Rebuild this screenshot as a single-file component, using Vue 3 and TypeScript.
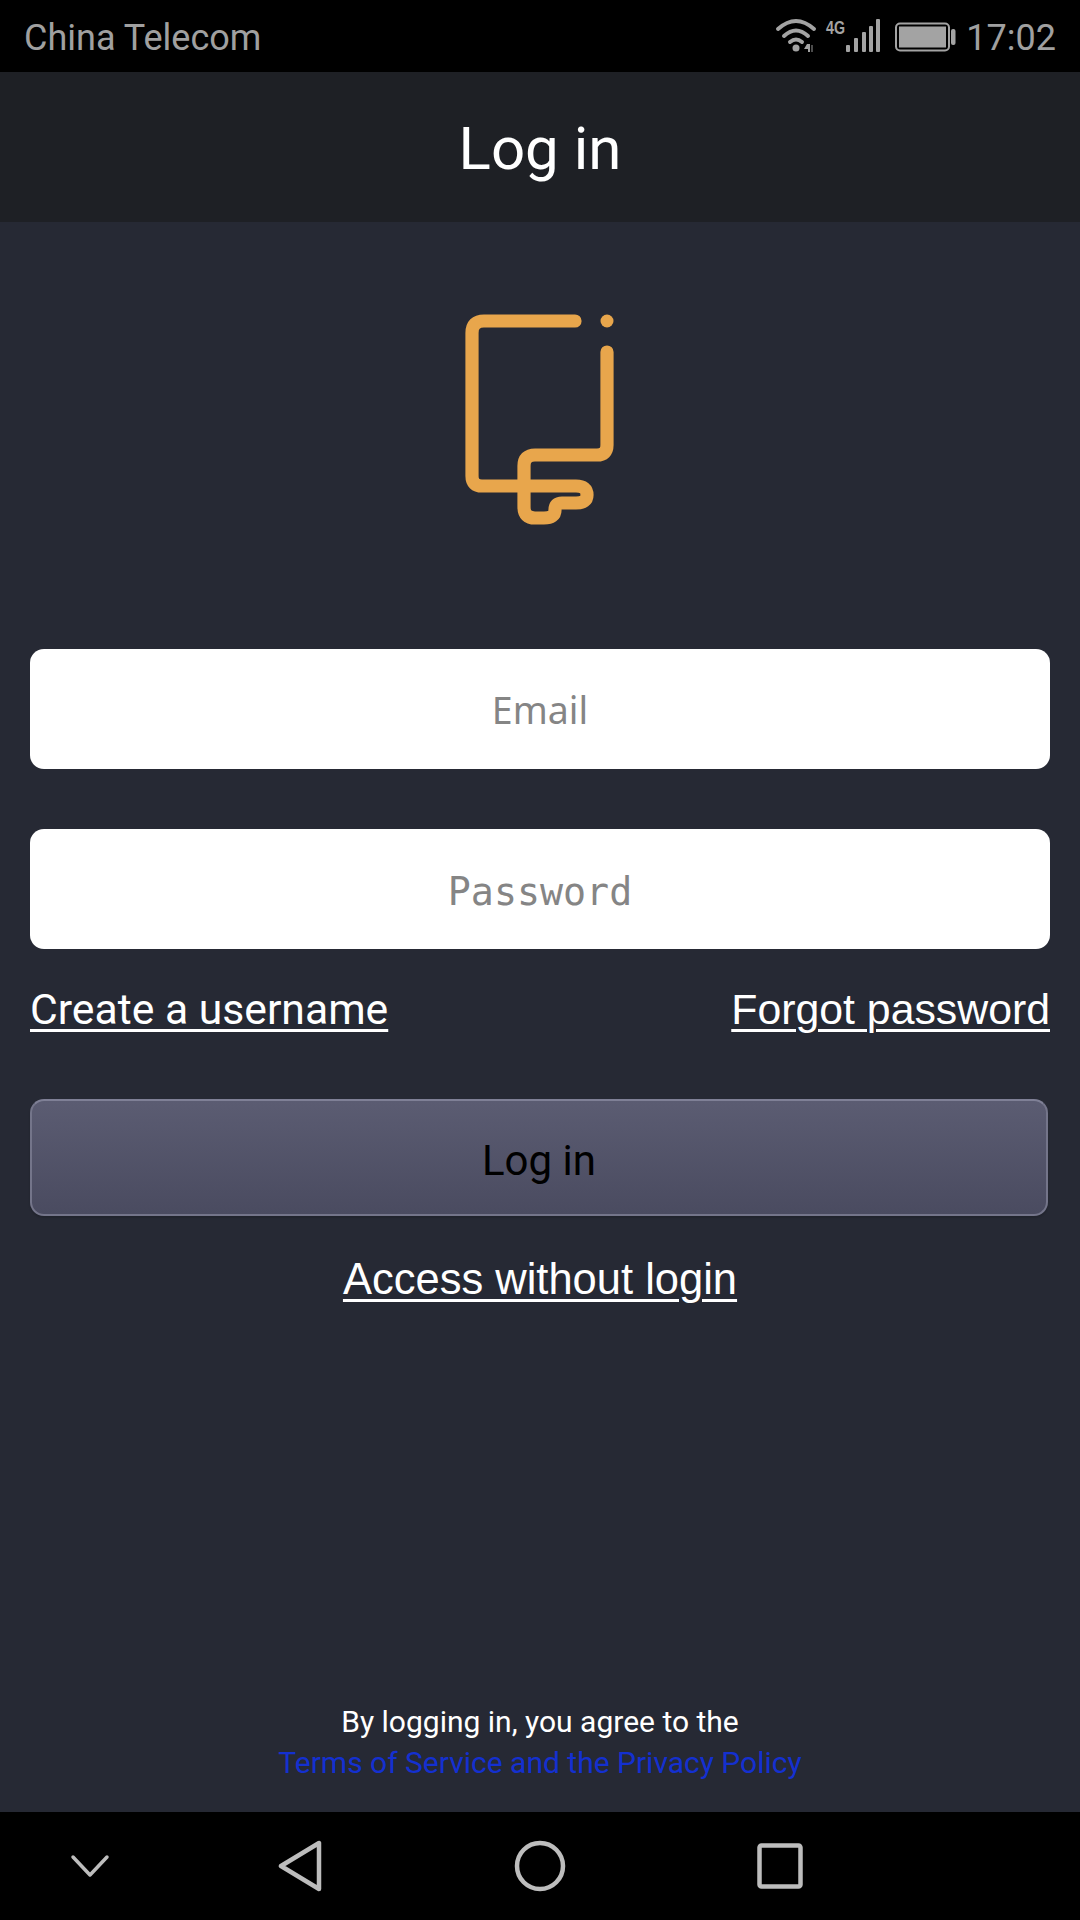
<template>
  <div class="screen">
    <div class="status-bar">
      <span class="carrier">China Telecom</span>
      <div class="status-right">
        <svg class="status-icons" width="190" height="72" viewBox="0 0 190 72">
          <g fill="none" stroke="#a3a3a3" stroke-width="4" stroke-linecap="round">
            <path d="M9 29 Q27 13 45 29" />
            <path d="M15 36 Q27 25 39 36" />
            <path d="M21 42 Q27 37 33 42" />
          </g>
          <circle cx="27" cy="48" r="3.5" fill="#a3a3a3" />
          <path d="M38 44 L35 49 H39 V52 H41 V44 Z" fill="#a3a3a3" />
          <path d="M43 45 V52" stroke="#666" stroke-width="1.5" />
          <text x="57" y="34" class="net" textLength="19" lengthAdjust="spacingAndGlyphs">4G</text>
          <g fill="#a3a3a3">
            <rect v-for="bar in bars" :key="bar.x" :x="bar.x" :y="bar.y" width="4" :height="52 - bar.y" rx="1" />
          </g>
          <rect x="127" y="23.5" width="53" height="27" rx="4" fill="none" stroke="#a3a3a3" stroke-width="2" />
          <rect x="130" y="26.5" width="47" height="21" fill="#a3a3a3" />
          <rect x="182" y="29" width="4.5" height="16" rx="2" fill="#a3a3a3" />
        </svg>
        <span class="time">17:02</span>
      </div>
    </div>

    <header class="title-bar">Log in</header>

    <main class="content">
      <svg class="logo" width="200" height="250" viewBox="0 0 200 250">
        <path
          d="M135 31 H44 Q32 31 32 43 V186 Q32 196 42 196 H136 Q147 196 147 205 Q147 213 136 213 H122 Q115 213 115 220 Q115 228 104 228 H95 Q84 228 84 217 V176 Q84 165 95 165 H157 Q167 165 167 155 V62"
          fill="none"
          stroke="#e8a64c"
          stroke-width="13.2"
          stroke-linecap="round"
        />
        <circle cx="167" cy="31" r="6.5" fill="#e8a64c" />
      </svg>

      <input class="field" type="text" placeholder="Email" />
      <input class="field field-password" type="password" placeholder="Password" />

      <div class="link-row">
        <a class="link">Create a username</a>
        <a class="link link-arial forgot">Forgot password</a>
      </div>

      <button class="login-btn" type="button">Log in</button>
      <a class="link link-arial access">Access without login</a>

      <footer class="terms">
        <div>By logging in, you agree to the</div>
        <div class="terms-link">Terms of Service and the Privacy Policy</div>
      </footer>
    </main>

    <nav class="nav-bar">
      <svg width="40" height="24" viewBox="0 0 40 24">
        <path d="M3 3 L20 21 L37 3" fill="none" stroke="#bdbdbd" stroke-width="3.5" stroke-linecap="round" stroke-linejoin="round" />
      </svg>
      <svg width="44" height="52" viewBox="0 0 44 52">
        <path d="M41 3 V49 L3 26 Z" fill="none" stroke="#bdbdbd" stroke-width="4.5" stroke-linejoin="round" />
      </svg>
      <svg width="52" height="52" viewBox="0 0 52 52">
        <circle cx="26" cy="26" r="23" fill="none" stroke="#bdbdbd" stroke-width="4.5" />
      </svg>
      <svg width="46" height="46" viewBox="0 0 46 46">
        <rect x="2.5" y="2.5" width="41" height="41" rx="2" fill="none" stroke="#bdbdbd" stroke-width="4.5" />
      </svg>
    </nav>
  </div>
</template>

<script setup lang="ts">
// signal strength bars
const bars = [
  { x: 77, y: 45 },
  { x: 85, y: 38 },
  { x: 93, y: 32 },
  { x: 100, y: 26 },
  { x: 107, y: 19 }
];
</script>

<style>
html,
body {
  margin: 0;
  background: #000;
}
</style>

<style scoped>
.screen {
  width: 1080px;
  height: 1920px;
  display: flex;
  flex-direction: column;
  background: #262934;
  font-family: Roboto, "Liberation Sans", sans-serif;
  overflow: hidden;
}

.status-bar {
  height: 72px;
  flex: none;
  box-sizing: border-box;
  background: #000;
  color: #a0a0a0;
  font-size: 36px;
  display: flex;
  align-items: center;
  justify-content: space-between;
  padding: 3px 24px 0;
}

.status-right {
  display: flex;
  align-items: center;
}

.status-icons {
  margin-top: -3px;
  margin-right: 7px;
}

.net {
  font-family: "Liberation Sans", sans-serif;
  font-size: 19px;
  font-weight: 700;
  fill: #a3a3a3;
}

.title-bar {
  height: 150px;
  flex: none;
  box-sizing: border-box;
  padding-top: 3px;
  background: #1e2025;
  color: #fff;
  font-size: 60px;
  display: flex;
  align-items: center;
  justify-content: center;
}

.content {
  flex: 1;
  display: flex;
  flex-direction: column;
  align-items: center;
  padding: 68px 30px 0;
}

.logo {
  flex: none;
}

.field {
  width: 100%;
  height: 120px;
  flex: none;
  box-sizing: border-box;
  margin: 0;
  border: none;
  border-radius: 14px;
  background: #fff;
  text-align: center;
  font-family: "Noto Sans", sans-serif;
  font-size: 37.5px;
  outline: none;
}

.field::placeholder {
  color: #858585;
  opacity: 1;
}

.content > .logo + .field {
  margin-top: 109px;
}

.field-password {
  margin-top: 60px;
  padding-top: 6px;
  font-family: "DejaVu Sans Mono", monospace;
  font-size: 38.3px;
}

.link-row {
  width: 100%;
  display: flex;
  justify-content: space-between;
  margin-top: 35px;
}

.link {
  color: #fff;
  font-size: 42.7px;
  line-height: 50px;
  text-decoration: underline;
  text-decoration-thickness: 3px;
  text-underline-offset: 5px;
}

.link-arial {
  font-family: "Liberation Sans", sans-serif;
  font-size: 43.5px;
}

.forgot {
  font-size: 42.8px;
}

.login-btn {
  width: 1018px;
  height: 117px;
  flex: none;
  align-self: flex-start;
  margin-top: 65px;
  padding-top: 6px;
  box-sizing: border-box;
  border: 2px solid #74758a;
  border-top-color: #7f8096;
  border-radius: 14px;
  background: linear-gradient(#5b5c72, #4a4b60);
  box-shadow: 0 2px 2px rgba(0, 0, 0, 0.15);
  color: #000;
  font-family: Roboto, "Liberation Sans", sans-serif;
  font-size: 42px;
}

.access {
  margin-top: 38px;
}

.terms {
  margin-top: auto;
  margin-bottom: 29px;
  color: #fff;
  font-size: 30px;
  line-height: 41px;
  text-align: center;
}

.terms-link {
  color: #1430d0;
}

.nav-bar {
  height: 108px;
  flex: none;
  background: #000;
  display: grid;
  grid-template-columns: 180px repeat(3, 240px);
  align-items: center;
  justify-items: center;
}
</style>
